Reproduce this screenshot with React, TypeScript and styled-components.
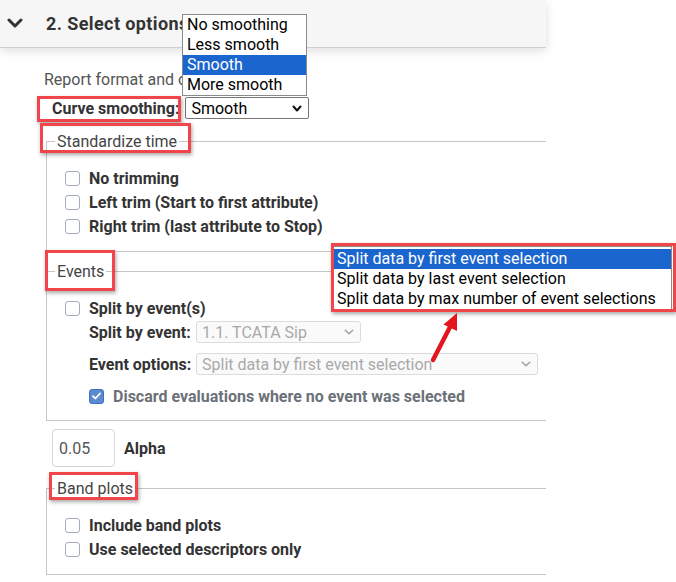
import React from "react";
import styled, { createGlobalStyle } from "styled-components";

const GlobalStyle = createGlobalStyle`
  html, body {
    margin: 0;
    padding: 0;
    background: #fff;
  }
  body {
    font-family: Roboto, "Liberation Sans", sans-serif;
    font-size: 16px;
    color: #333;
  }
`;

const Page = styled.div`
  position: relative;
  width: 676px;
  height: 582px;
  overflow: hidden;
  background: #fff;
`;

const Panel = styled.section`
  width: 546px;
`;

const Header = styled.header`
  box-sizing: border-box;
  height: 48px;
  display: flex;
  align-items: center;
  padding-left: 7px;
  padding-bottom: 1px;
  background: #f6f6f6;
  border-bottom: 1px solid #cfcfcf;
  box-shadow: 0 3px 10px rgba(0, 0, 0, 0.13);
`;

const Title = styled.h2`
  margin: 0 0 0 23px;
  font-size: 18px;
  font-weight: 700;
  letter-spacing: 0.4px;
  color: #333;
  white-space: nowrap;
`;

const Body = styled.div`
  padding: 22px 0 0 44px;
`;

const Intro = styled.p`
  margin: 0;
  font-size: 16px;
  line-height: 19px;
  color: #555;
  white-space: nowrap;
`;

const InlineRow = styled.div`
  display: flex;
  align-items: center;
  gap: 6px;
  margin-top: 8px;
  padding-left: 8px;
`;

const BoldLabel = styled.span<{ $muted?: boolean }>`
  font-size: 16px;
  font-weight: 700;
  color: ${(p) => (p.$muted ? "#6b7178" : "#333")};
  white-space: nowrap;
`;

const SelectBox = styled.div<{ $width: number; $disabled?: boolean }>`
  box-sizing: border-box;
  width: ${(p) => p.$width}px;
  height: 22px;
  display: flex;
  align-items: center;
  justify-content: space-between;
  padding: 0 6px 0 5px;
  font-size: 16px;
  color: ${(p) => (p.$disabled ? "#a9a9a9" : "#000")};
  background: ${(p) => (p.$disabled ? "#fafafa" : "#fff")};
  border: 1px solid ${(p) => (p.$disabled ? "#dcdcdc" : "#767676")};
  border-radius: ${(p) => (p.$disabled ? 3 : 2)}px;
  white-space: nowrap;
`;

const Fieldset = styled.fieldset<{ $gap: number; $bottom: number }>`
  margin: ${(p) => p.$gap}px 0 0 2px;
  padding: 0 0 ${(p) => p.$bottom}px 8px;
  min-width: 0;
  border: 1px solid #c6c6c6;
  border-right: none;
`;

const Legend = styled.legend`
  padding: 0 2px;
  font-size: 16px;
  line-height: 19px;
  color: #444;
`;

const FieldBody = styled.div`
  display: flex;
  flex-direction: column;
  padding: 15px 0 0 10px;
`;

const CheckRow = styled.label`
  display: flex;
  align-items: center;
  gap: 9px;
  height: 24px;
`;

const Box = styled.span<{ $checked?: boolean }>`
  box-sizing: border-box;
  width: 15px;
  height: 15px;
  display: flex;
  align-items: center;
  justify-content: center;
  border-radius: 3px;
  border: 1px solid ${(p) => (p.$checked ? "#3d70bd" : "#a3adb9")};
  background: ${(p) => (p.$checked ? "#5a8bd0" : "#fff")};
`;

const SubGroup = styled.div`
  display: flex;
  flex-direction: column;
  gap: 8px;
  padding-left: 24px;
`;

const SelectRow = styled.div`
  display: grid;
  grid-template-columns: 101px auto;
  column-gap: 6px;
  align-items: center;
  height: 24px;
`;

const AlphaRow = styled.div`
  display: flex;
  align-items: center;
  gap: 9px;
  margin: 8px 0 0 8px;
`;

const NumberInput = styled.div`
  box-sizing: border-box;
  width: 63px;
  height: 38px;
  display: flex;
  align-items: center;
  padding-left: 6px;
  font-size: 16px;
  color: #555;
  border: 1px solid #d6d6d6;
  border-radius: 4px;
`;

const OptionList = styled.ul<{ $left: number; $top: number; $width: number }>`
  position: absolute;
  left: ${(p) => p.$left}px;
  top: ${(p) => p.$top}px;
  width: ${(p) => p.$width}px;
  box-sizing: border-box;
  margin: 0;
  padding: 0;
  list-style: none;
  background: #fff;
  border: 1px solid #8a8a8a;
  z-index: 5;
`;

const OptionItem = styled.li<{ $selected?: boolean; $pad: number }>`
  height: 20px;
  line-height: 20px;
  padding: 0 ${(p) => p.$pad}px;
  font-size: 16px;
  white-space: nowrap;
  color: ${(p) => (p.$selected ? "#fff" : "#000")};
  background: ${(p) => (p.$selected ? "#1b65cf" : "transparent")};
`;

const Callout = styled.div<{ $x: number; $y: number; $w: number; $h: number }>`
  position: absolute;
  left: ${(p) => p.$x}px;
  top: ${(p) => p.$y}px;
  width: ${(p) => p.$w}px;
  height: ${(p) => p.$h}px;
  box-sizing: border-box;
  border: 3px solid #f0454b;
  box-shadow: 1px 2px 4px rgba(0, 0, 0, 0.35);
  pointer-events: none;
  z-index: 10;
`;

const ArrowLayer = styled.svg`
  position: absolute;
  left: 420px;
  top: 300px;
  z-index: 10;
  pointer-events: none;
`;

const Chevron = ({ color, w, h, sw }: { color: string; w: number; h: number; sw: number }) => (
  <svg width={w} height={h} viewBox={`0 0 ${w} ${h}`}>
    <polyline
      points={`${sw / 2 + 0.5},${sw / 2 + 0.5} ${w / 2},${h - sw / 2 - 0.5} ${w - sw / 2 - 0.5},${sw / 2 + 0.5}`}
      fill="none"
      stroke={color}
      strokeWidth={sw}
      strokeLinecap="round"
      strokeLinejoin="round"
    />
  </svg>
);

const Check = ({ checked, label, muted }: { checked?: boolean; label: string; muted?: boolean }) => (
  <CheckRow>
    <Box $checked={checked}>
      {checked && (
        <svg width="9" height="8" viewBox="0 0 9 8">
          <polyline points="1,4.2 3.5,6.5 8,1.5" fill="none" stroke="#fff" strokeWidth="1.8" strokeLinecap="round" strokeLinejoin="round" />
        </svg>
      )}
    </Box>
    <BoldLabel $muted={muted}>{label}</BoldLabel>
  </CheckRow>
);

const smoothing = ["No smoothing", "Less smooth", "Smooth", "More smooth"];
const eventOptions = [
  "Split data by first event selection",
  "Split data by last event selection",
  "Split data by max number of event selections",
];

export default function App() {
  return (
    <Page>
      <GlobalStyle />
      <Panel>
        <Header>
          <Chevron color="#333" w={16} h={10} sw={3} />
          <Title>2. Select options</Title>
        </Header>
        <Body>
          <Intro>Report format and options</Intro>
          <InlineRow>
            <BoldLabel>Curve smoothing:</BoldLabel>
            <SelectBox $width={124}>
              Smooth
              <Chevron color="#111" w={10} h={7} sw={2} />
            </SelectBox>
          </InlineRow>

          <Fieldset $gap={13} $bottom={13}>
            <Legend>Standardize time</Legend>
            <FieldBody>
              <Check label="No trimming" />
              <Check label="Left trim (Start to first attribute)" />
              <Check label="Right trim (last attribute to Stop)" />
            </FieldBody>
          </Fieldset>

          <Fieldset $gap={10} $bottom={12}>
            <Legend>Events</Legend>
            <FieldBody>
              <Check label="Split by event(s)" />
              <SubGroup>
                <SelectRow>
                  <BoldLabel>Split by event:</BoldLabel>
                  <SelectBox $width={165} $disabled>
                    1.1. TCATA Sip
                    <Chevron color="#a0a0a0" w={10} h={6} sw={1.5} />
                  </SelectBox>
                </SelectRow>
                <SelectRow>
                  <BoldLabel>Event options:</BoldLabel>
                  <SelectBox $width={342} $disabled>
                    Split data by first event selection
                    <Chevron color="#a0a0a0" w={10} h={6} sw={1.5} />
                  </SelectBox>
                </SelectRow>
                <Check checked muted label="Discard evaluations where no event was selected" />
              </SubGroup>
            </FieldBody>
          </Fieldset>

          <AlphaRow>
            <NumberInput>0.05</NumberInput>
            <BoldLabel>Alpha</BoldLabel>
          </AlphaRow>

          <Fieldset $gap={12} $bottom={13}>
            <Legend>Band plots</Legend>
            <FieldBody>
              <Check label="Include band plots" />
              <Check label="Use selected descriptors only" />
            </FieldBody>
          </Fieldset>
        </Body>
      </Panel>

      <OptionList $left={182} $top={14} $width={125}>
        {smoothing.map((s) => (
          <OptionItem key={s} $pad={4} $selected={s === "Smooth"}>
            {s}
          </OptionItem>
        ))}
      </OptionList>

      <OptionList $left={333} $top={246} $width={339} style={{ paddingTop: 2 }}>
        {eventOptions.map((s, i) => (
          <OptionItem key={s} $pad={3} $selected={i === 0}>
            {s}
          </OptionItem>
        ))}
      </OptionList>

      <Callout $x={37} $y={96} $w={144} $h={26} />
      <Callout $x={40} $y={123} $w={151} $h={30} />
      <Callout $x={45} $y={250} $w={70} $h={41} />
      <Callout $x={331} $y={243} $w={345} $h={69} />
      <Callout $x={49} $y={472} $w={89} $h={28} />

      <ArrowLayer width="50" height="70" viewBox="0 0 50 70">
        <line x1="13" y1="60" x2="30" y2="27" stroke="#e3161f" strokeWidth="4.5" strokeLinecap="round" />
        <polygon points="37,13 23.5,24.5 37,31" fill="#e3161f" />
      </ArrowLayer>
    </Page>
  );
}
